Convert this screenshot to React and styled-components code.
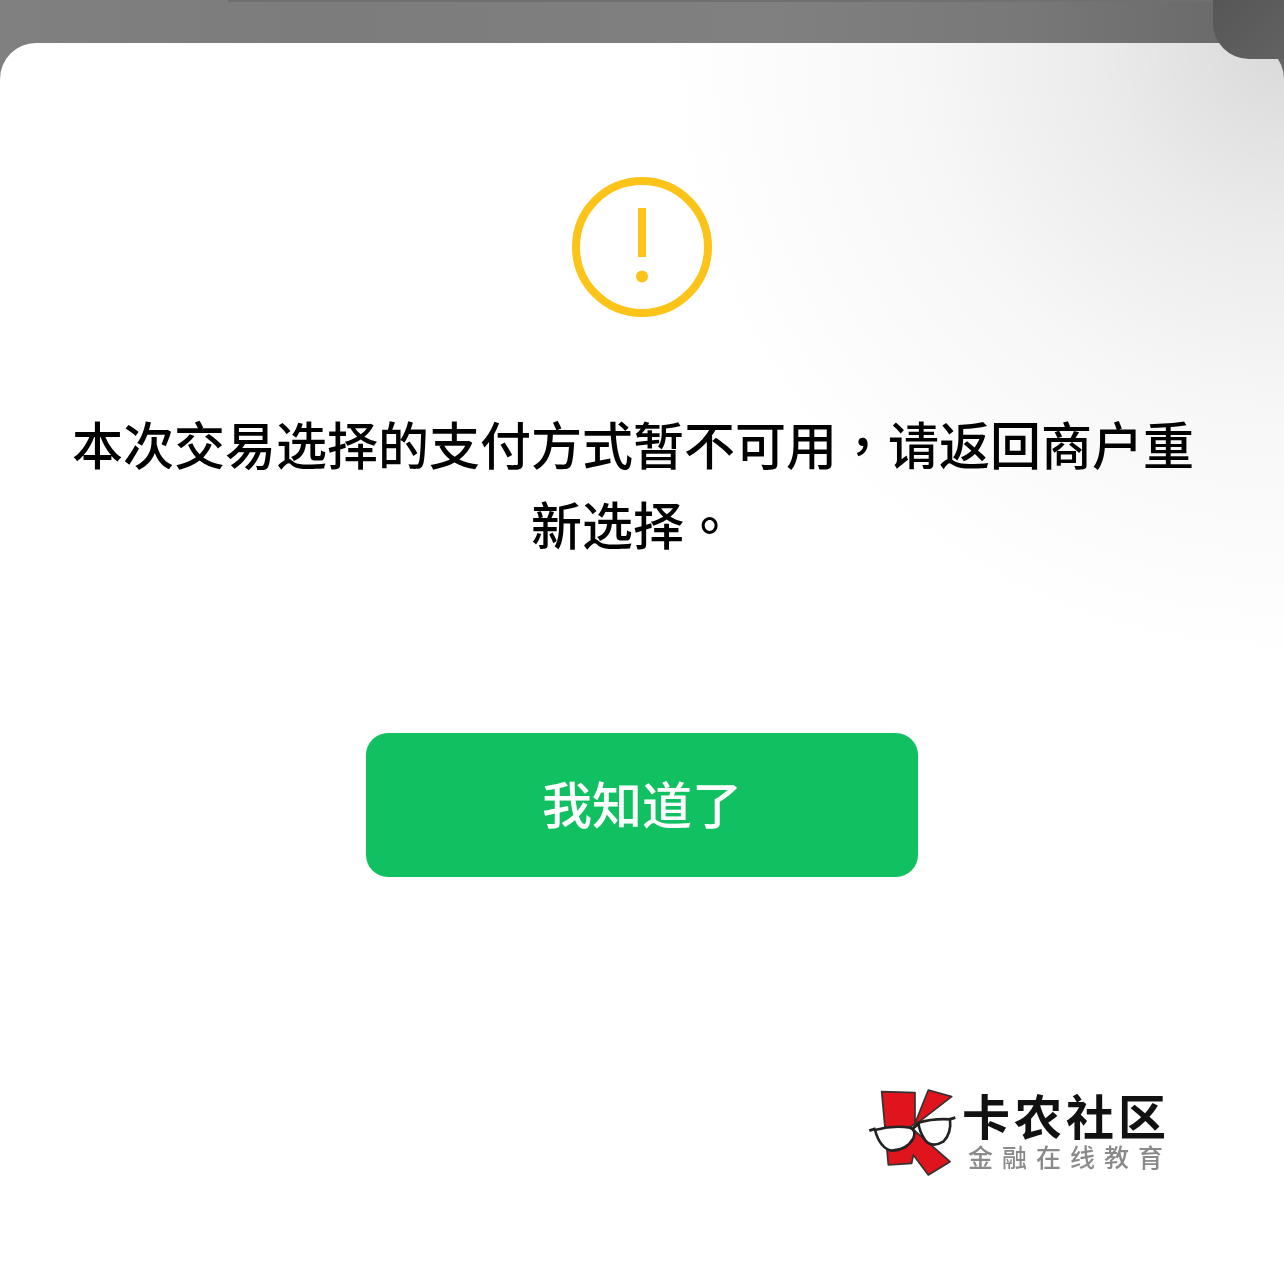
import React from 'react'
import styled, { createGlobalStyle } from 'styled-components'

const GlobalStyle = createGlobalStyle`
  html, body {
    margin: 0;
    padding: 0;
    background: #808080;
  }
  * {
    box-sizing: border-box;
  }
`

const cjk = `"Noto Sans CJK SC", "Noto Sans", sans-serif`

const WarningIcon = () => (
  <svg width='140' height='140' viewBox='0 0 140 140'>
    <circle cx='70' cy='70' r='66' fill='none' stroke='#fcc419' strokeWidth='8' />
    <rect x='66' y='31' width='8' height='49' fill='#fcc419' />
    <circle cx='70' cy='99.5' r='6' fill='#fcc419' />
  </svg>
)

const LogoMark = () => (
  <svg width='100' height='100' viewBox='0 0 300 300'>
    <path
      d='M65 35 L165 38 L165 130 L205 30 L275 50 L178 125 L150 140 L270 245 L205 285 L160 225 L155 250 L85 255 L80 200 Z'
      fill='#e0141c'
      stroke='#333'
      strokeWidth='5'
      strokeLinejoin='round'
    />
    <path d='M45 150 Q100 135 150 143 Q170 150 160 175 Q140 210 95 212 Q60 205 45 150 Z' fill='#fff' stroke='#222' strokeWidth='8' />
    <path d='M175 128 Q220 115 270 118 Q275 160 250 185 Q215 205 195 180 Q178 155 175 128 Z' fill='#fff' stroke='#222' strokeWidth='8' />
    <path d='M28 152 L47 146 M158 146 L177 130 M268 118 L286 113' stroke='#222' strokeWidth='9' fill='none' />
  </svg>
)

const App = () => (
  <Page>
    <GlobalStyle />
    <TopEdge />
    <CornerTab />
    <Sheet>
      <IconWrap>
        <WarningIcon />
      </IconWrap>
      <Message>
        本次交易选择的支付方式暂不可用<Punct>，</Punct>请返回商户重新选择<Punct>。</Punct>
      </Message>
      <ConfirmButton>我知道了</ConfirmButton>
      <Watermark>
        <LogoMark />
        <LogoText>
          <LogoTitle>卡农社区</LogoTitle>
          <LogoSub>金融在线教育</LogoSub>
        </LogoText>
      </Watermark>
    </Sheet>
  </Page>
)

const Page = styled.div`
  position: relative;
  width: 1284px;
  height: 1268px;
  padding-top: 43px;
  overflow: hidden;
  background: linear-gradient(90deg, #808080 0%, #7c7c7c 25%, #808080 60%, #787878 80%, #666666 100%);
`

const TopEdge = styled.div`
  position: absolute;
  top: 0;
  left: 228px;
  right: 0;
  height: 2px;
  background: #707070;
`

const CornerTab = styled.div`
  position: absolute;
  top: 0;
  right: 0;
  width: 71px;
  height: 59px;
  background: linear-gradient(135deg, #565656, #626262);
  border-bottom-left-radius: 36px;
  z-index: 2;
`

const Sheet = styled.main`
  display: flex;
  flex-direction: column;
  align-items: center;
  height: 1225px;
  padding: 134px 0 0;
  border-radius: 36px 36px 0 0;
  background:
    radial-gradient(circle 620px at 100% 0%, rgba(0, 0, 0, 0.15) 0%, rgba(0, 0, 0, 0.08) 30%, rgba(0, 0, 0, 0.03) 60%, rgba(0, 0, 0, 0) 100%),
    #ffffff;
`

const IconWrap = styled.div`
  display: flex;
  width: 140px;
  height: 140px;
`

const Message = styled.p`
  width: 1130px;
  margin: 86px 18px 0 0;
  font-family: ${cjk};
  font-size: 51px;
  font-weight: 500;
  line-height: 80px;
  text-align: center;
  color: #000000;
`

const Punct = styled.span`
  font-family: "Noto Sans CJK TC", sans-serif;
`

const ConfirmButton = styled.button`
  width: 552px;
  height: 144px;
  margin-top: 170px;
  padding-bottom: 8px;
  border: none;
  border-radius: 22px;
  background: #11c161;
  color: #ffffff;
  font-family: ${cjk};
  font-size: 50px;
  font-weight: 500;
`

const Watermark = styled.div`
  display: flex;
  align-items: center;
  gap: 2px;
  align-self: flex-end;
  width: 424px;
  margin-top: 203px;
  filter: blur(0.7px);
`

const LogoText = styled.div`
  display: flex;
  flex-direction: column;
  gap: 7px;
`

const LogoTitle = styled.span`
  font-family: ${cjk};
  font-size: 48px;
  font-weight: 700;
  line-height: 46px;
  letter-spacing: 4px;
  color: #111111;
`

const LogoSub = styled.span`
  margin-left: 6px;
  font-family: ${cjk};
  font-size: 25px;
  font-weight: 500;
  line-height: 25px;
  letter-spacing: 9px;
  color: #8a8a8a;
`

export default App
